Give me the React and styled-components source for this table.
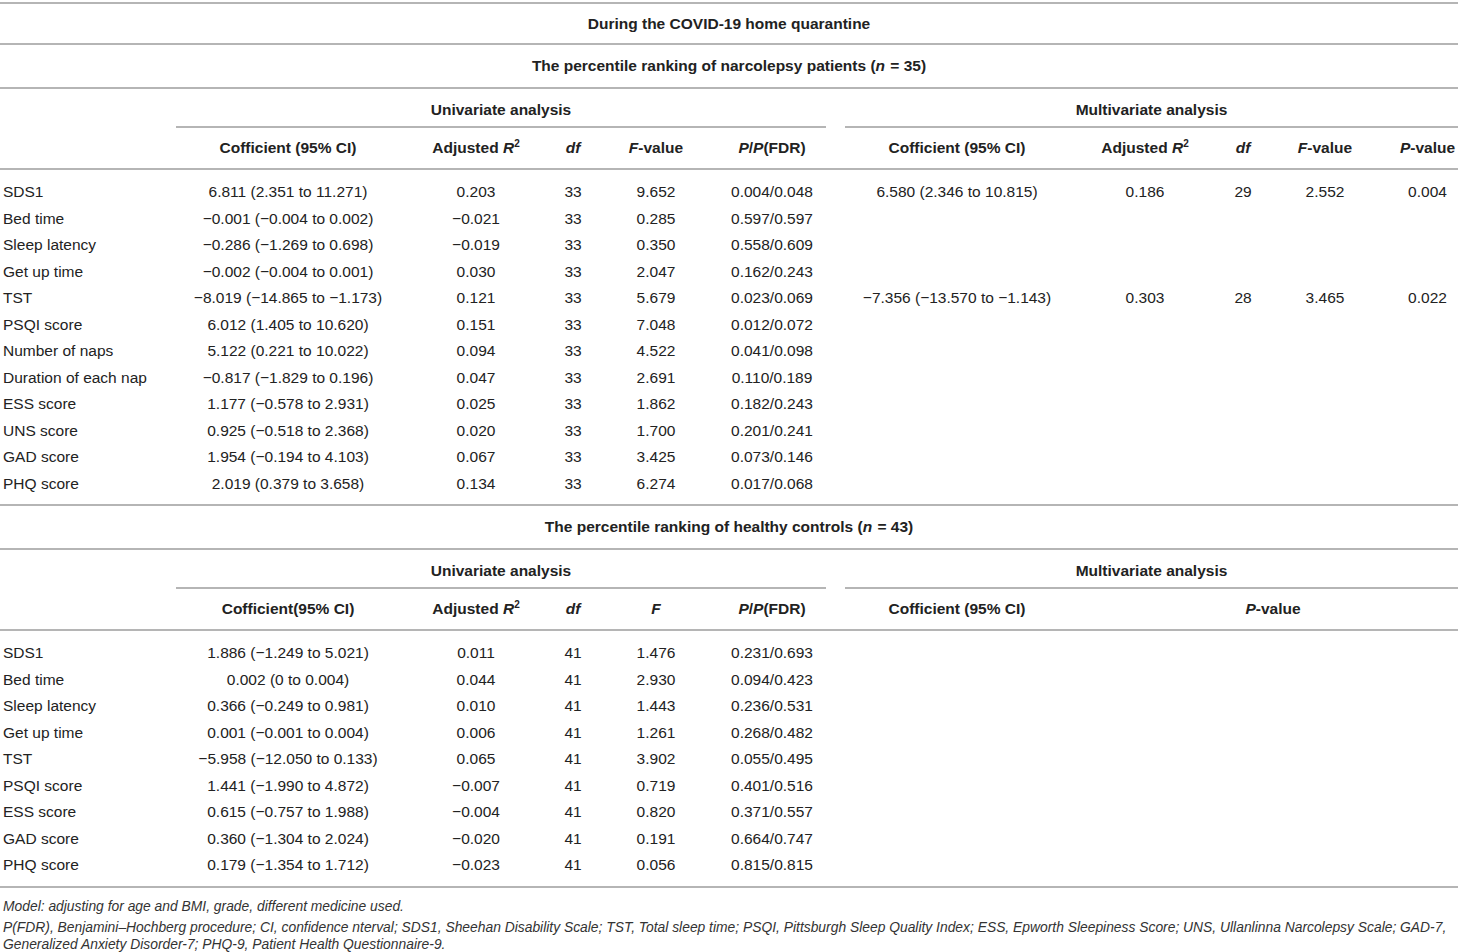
import styled, { createGlobalStyle } from "styled-components";
import React from "react";

const GlobalStyle = createGlobalStyle`
  html, body {
    margin: 0;
    padding: 0;
    background: #fff;
  }
  body {
    font-family: "Liberation Sans", Arial, Helvetica, sans-serif;
    color: #222;
  }
`;

// label + five univariate columns + gap = 845px
const UNI = "176px 224px 152px 42px 124px 108px 19px";
const COLS_A = `${UNI} 224px 152px 44px 120px 73px`;
const COLS_B = `${UNI} 224px 19px 370px`;

const M = "\u2212";

const narcoRows = [
  ["SDS1", "6.811 (2.351 to 11.271)", "0.203", "33", "9.652", "0.004/0.048", "6.580 (2.346 to 10.815)", "0.186", "29", "2.552", "0.004"],
  ["Bed time", `${M}0.001 (${M}0.004 to 0.002)`, `${M}0.021`, "33", "0.285", "0.597/0.597"],
  ["Sleep latency", `${M}0.286 (${M}1.269 to 0.698)`, `${M}0.019`, "33", "0.350", "0.558/0.609"],
  ["Get up time", `${M}0.002 (${M}0.004 to 0.001)`, "0.030", "33", "2.047", "0.162/0.243"],
  ["TST", `${M}8.019 (${M}14.865 to ${M}1.173)`, "0.121", "33", "5.679", "0.023/0.069", `${M}7.356 (${M}13.570 to ${M}1.143)`, "0.303", "28", "3.465", "0.022"],
  ["PSQI score", "6.012 (1.405 to 10.620)", "0.151", "33", "7.048", "0.012/0.072"],
  ["Number of naps", "5.122 (0.221 to 10.022)", "0.094", "33", "4.522", "0.041/0.098"],
  ["Duration of each nap", `${M}0.817 (${M}1.829 to 0.196)`, "0.047", "33", "2.691", "0.110/0.189"],
  ["ESS score", `1.177 (${M}0.578 to 2.931)`, "0.025", "33", "1.862", "0.182/0.243"],
  ["UNS score", `0.925 (${M}0.518 to 2.368)`, "0.020", "33", "1.700", "0.201/0.241"],
  ["GAD score", `1.954 (${M}0.194 to 4.103)`, "0.067", "33", "3.425", "0.073/0.146"],
  ["PHQ score", "2.019 (0.379 to 3.658)", "0.134", "33", "6.274", "0.017/0.068"],
];

const healthyRows = [
  ["SDS1", `1.886 (${M}1.249 to 5.021)`, "0.011", "41", "1.476", "0.231/0.693"],
  ["Bed time", "0.002 (0 to 0.004)", "0.044", "41", "2.930", "0.094/0.423"],
  ["Sleep latency", `0.366 (${M}0.249 to 0.981)`, "0.010", "41", "1.443", "0.236/0.531"],
  ["Get up time", `0.001 (${M}0.001 to 0.004)`, "0.006", "41", "1.261", "0.268/0.482"],
  ["TST", `${M}5.958 (${M}12.050 to 0.133)`, "0.065", "41", "3.902", "0.055/0.495"],
  ["PSQI score", `1.441 (${M}1.990 to 4.872)`, `${M}0.007`, "41", "0.719", "0.401/0.516"],
  ["ESS score", `0.615 (${M}0.757 to 1.988)`, `${M}0.004`, "41", "0.820", "0.371/0.557"],
  ["GAD score", `0.360 (${M}1.304 to 2.024)`, `${M}0.020`, "41", "0.191", "0.664/0.747"],
  ["PHQ score", `0.179 (${M}1.354 to 1.712)`, `${M}0.023`, "41", "0.056", "0.815/0.815"],
];

const R2 = () => (
  <>
    Adjusted <i>R</i>
    <sup>2</sup>
  </>
);

const uniHeadA = [
  "Cofficient (95% CI)",
  <R2 />,
  <i>df</i>,
  <>
    <i>F</i>-value
  </>,
  <>
    <i>P</i>/<i>P</i>(FDR)
  </>,
];

const uniHeadB = [
  "Cofficient(95% CI)",
  <R2 />,
  <i>df</i>,
  <i>F</i>,
  <>
    <i>P</i>/<i>P</i>(FDR)
  </>,
];

const multiHeadA = [
  "Cofficient (95% CI)",
  <R2 />,
  <i>df</i>,
  <>
    <i>F</i>-value
  </>,
  <>
    <i>P</i>-value
  </>,
];

const multiHeadB = [
  "Cofficient (95% CI)",
  null,
  <>
    <i>P</i>-value
  </>,
];

const Section = ({ title, cols, uniHead, multiHead, rows, multiCount }) => {
  const renderMulti = (vals, isHead) =>
    Array.from({ length: multiCount }).map((_, i) => (
      <Cell key={"m" + i} $bold={isHead} $pl={multiCount === 5 && i === 4 ? 12 : 0}>
        {vals[i]}
      </Cell>
    ));

  return (
    <>
      <TitleRow>{title}</TitleRow>
      <GroupRow $cols={cols}>
        <span />
        <Group $span={5}>Univariate analysis</Group>
        <span />
        <Group $span={multiCount}>Multivariate analysis</Group>
      </GroupRow>
      <HeadRow $cols={cols}>
        <span />
        {uniHead.map((h, i) => (
          <Cell key={i} $bold>
            {h}
          </Cell>
        ))}
        <span />
        {renderMulti(multiHead, true)}
      </HeadRow>
      <Body>
        {rows.map((r) => (
          <DataRow key={r[0]} $cols={cols}>
            <Label>{r[0]}</Label>
            {r.slice(1, 6).map((v, i) => (
              <Cell key={i}>{v}</Cell>
            ))}
            <span />
            {renderMulti(r.slice(6), false)}
          </DataRow>
        ))}
      </Body>
    </>
  );
};

const App = () => {
  return (
    <Page>
      <GlobalStyle />
      <Table>
        <TopRow>During the COVID-19 home quarantine</TopRow>
        <Section
          title={
            <>
              The percentile ranking of narcolepsy patients (<i>n</i>&nbsp;=&nbsp;35)
            </>
          }
          cols={COLS_A}
          uniHead={uniHeadA}
          multiHead={multiHeadA}
          rows={narcoRows}
          multiCount={5}
        />
        <Section
          title={
            <>
              The percentile ranking of healthy controls (<i>n</i>&nbsp;=&nbsp;43)
            </>
          }
          cols={COLS_B}
          uniHead={uniHeadB}
          multiHead={multiHeadB}
          rows={healthyRows}
          multiCount={3}
        />
      </Table>
      <Notes>
        <Note>Model: adjusting for age and BMI, grade, different medicine used.</Note>
        <Note>
          P(FDR), Benjamini–Hochberg procedure; CI, confidence nterval; SDS1, Sheehan Disability Scale; TST, Total
          sleep time; PSQI, Pittsburgh Sleep Quality Index; ESS, Epworth Sleepiness Score; UNS, Ullanlinna Narcolepsy
          Scale; GAD-7, Generalized Anxiety Disorder-7; PHQ-9, Patient Health Questionnaire-9.
        </Note>
      </Notes>
    </Page>
  );
};

export default App;

const LINE = "2px solid #b5b5b5";

const Page = styled.div`
  width: 1458px;
  padding-top: 2px;
  font-size: 15.5px;
`;

const Table = styled.div`
  border-top: ${LINE};
  display: flex;
  flex-direction: column;
`;

const TopRow = styled.div`
  height: 39px;
  display: flex;
  align-items: center;
  justify-content: center;
  font-weight: bold;
  border-bottom: ${LINE};
`;

const TitleRow = styled.div`
  height: 42px;
  display: flex;
  align-items: center;
  justify-content: center;
  font-weight: bold;
  border-bottom: ${LINE};

  i {
    font-style: italic;
    margin-right: 1px;
  }
`;

const GroupRow = styled.div`
  display: grid;
  grid-template-columns: ${(p) => p.$cols};
  height: 39px;
`;

const Group = styled.div`
  grid-column: span ${(p) => p.$span};
  display: flex;
  align-items: center;
  justify-content: center;
  padding-top: 4px;
  font-weight: bold;
  border-bottom: ${LINE};
`;

const HeadRow = styled.div`
  display: grid;
  grid-template-columns: ${(p) => p.$cols};
  height: 40px;
  align-items: center;
  border-bottom: ${LINE};

  sup {
    font-size: 10px;
    vertical-align: 6px;
    line-height: 0;
  }
`;

const Body = styled.div`
  padding: 9px 0 7px;
  border-bottom: ${LINE};
`;

const DataRow = styled.div`
  display: grid;
  grid-template-columns: ${(p) => p.$cols};
  height: 26.5px;
  align-items: center;
`;

const Cell = styled.div`
  text-align: center;
  white-space: nowrap;
  font-weight: ${(p) => (p.$bold ? "bold" : "normal")};
  padding-left: ${(p) => p.$pl || 0}px;
`;

const Label = styled.div`
  padding-left: 3px;
  white-space: nowrap;
`;

const Notes = styled.div`
  padding: 10px 3px 0;
  font-size: 13.85px;
  font-style: italic;
  color: #333;
`;

const Note = styled.p`
  margin: 0 0 4px;
  line-height: 17px;
`;
